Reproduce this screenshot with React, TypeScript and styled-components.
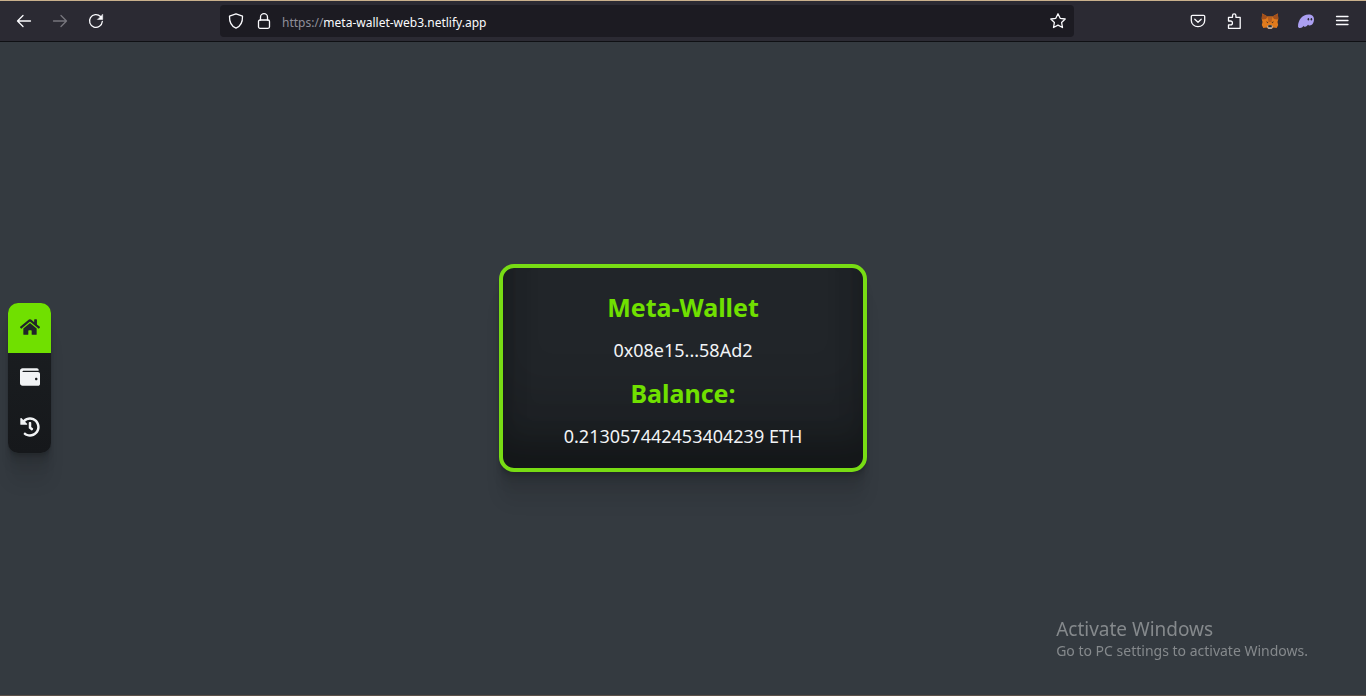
import React, { useState } from "react";
import styled, { createGlobalStyle } from "styled-components";
import { FaHistory, FaHome, FaWallet } from "react-icons/fa";

const GlobalStyle = createGlobalStyle`
  *, *::before, *::after { box-sizing: border-box; }
  body {
    margin: 0;
    background: #343a40;
    font-family: "Noto Sans", sans-serif;
  }
  button { border: 0; padding: 0; background: none; cursor: pointer; }
`;

const Page = styled.div`
  display: flex;
  flex-direction: column;
  min-height: 100vh;
  border-bottom: 1px solid #5c5047;
`;

const Toolbar = styled.header`
  display: flex;
  align-items: center;
  gap: 8%;
  height: 42px;
  padding: 0 8px;
  background: #2b2a33;
  border-top: 1px solid #c9b08c;
  border-bottom: 1px solid #0f1014;
`;

const ToolGroup = styled.div`
  display: flex;
  gap: 4px;
`;

const ToolButton = styled.button`
  display: grid;
  place-items: center;
  width: 32px;
  height: 32px;
  color: #fbfbfe;
  &:disabled { color: #77767e; }
`;

const AddressBar = styled.div`
  display: flex;
  flex: 1;
  align-items: center;
  min-width: 0;
  height: 32px;
  padding-left: 2px;
  border-radius: 4px;
  background: #1c1b22;
`;

const AddressButton = styled(ToolButton)`
  width: 28px;
`;

const Scheme = styled.label`
  padding: 3px 0 0 4px;
  font-size: 12px;
  line-height: 20px;
  color: #8f8f9a;
`;

const AddressInput = styled.input`
  flex: 1;
  min-width: 0;
  height: 23px;
  padding: 3px 0 0;
  border: 0;
  outline: 0;
  background: none;
  font-family: inherit;
  font-size: 12px;
  line-height: 20px;
  color: #fbfbfe;
`;

const Main = styled.main`
  display: grid;
  flex: 1;
  grid-template-columns: 1fr auto 1fr;
  align-items: center;
  padding: 0 8px 2px;
`;

const SideNav = styled.nav`
  display: flex;
  flex-direction: column;
  width: 43px;
  margin-top: 20px;
  overflow: hidden;
  border-radius: 10px;
  background: linear-gradient(#1b1f22, #16181b);
  box-shadow: 0 2px 1px #0000000f, 0 4px 2px #0000000f, 0 8px 4px #0000000f,
    0 16px 8px #0000000f, 0 32px 16px #0000000f;
`;

const NavButton = styled.button<{ $active: boolean }>`
  display: grid;
  place-items: center;
  height: 50px;
  padding-bottom: 2px;
  font-size: 20px;
  && {
    color: ${(p) => (p.$active ? "#212529" : "#f1f3f5")};
    background: ${(p) => (p.$active ? "#70e000" : "transparent")};
  }
`;

const Card = styled.section`
  display: flex;
  flex-direction: column;
  align-items: center;
  gap: 8px;
  width: 368px;
  padding: 20px 16px 16px;
  border: 4px solid #78dc14;
  border-radius: 15px;
  background: #212529;
  text-align: center;
  box-shadow: inset 0 -23px 25px #0000002b, inset 0 -36px 30px #00000026,
    inset 0 -79px 40px #0000001a, 0 2px 1px #0000000f, 0 4px 2px #0000000f,
    0 8px 4px #0000000f, 0 16px 8px #0000000f, 0 32px 16px #0000000f;
`;

const Heading = styled.h2`
  margin: 0;
  font-size: 25px;
  line-height: 38px;
  font-weight: 700;
  color: #70e000;
`;

const Value = styled.p`
  margin: 0;
  font-size: 18px;
  line-height: 32px;
  color: #f1f3f5;
`;

const Watermark = styled.aside`
  position: fixed;
  right: 58px;
  bottom: 35px;
  color: #85898c;
  pointer-events: none;
`;

const WatermarkTitle = styled.p`
  margin: 0;
  font-size: 19px;
  line-height: 24px;
`;

const WatermarkText = styled.p`
  margin: 0;
  font-size: 14px;
  line-height: 20px;
`;

const Line = ({ children }: { children: React.ReactNode }) => (
  <svg width="16" height="16" viewBox="0 0 16 16" fill="none" stroke="currentColor"
    strokeWidth="1.3" strokeLinecap="round" strokeLinejoin="round" aria-hidden="true">
    {children}
  </svg>
);

const Fox = () => (
  <svg width="18" height="18" viewBox="0 0 18 18" aria-hidden="true">
    <path d="M1.200 1.500 6.500 4.500h5l5.300-3 .5 5.500-.8 3 .7 3-1.500 3-3.200-.6L10.500 17h-3L5.500 15.400 2.300 16 .8 13l.7-3-.8-3z" fill="#e07a1c" />
    <path d="M1.200 1.500 6.500 4.500 5 7 1.500 7.500.7 6.500zM16.800 1.500 11.500 4.500 13 7l3.500.5.8-1z" fill="#a2501d" />
    <path d="M6.500 4.500h5L10.500 10h-3z" fill="#b8601f" />
    <path d="M5 9.300l2.400 1-.9.900zM13 9.300l-2.400 1 .9.900z" fill="#4a3428" />
    <path d="M6 14.800 7.300 13h3.400l1.300 1.800-1.500 2.200h-3z" fill="#b9aea4" />
    <path d="M7.300 13.200h3.400v2H7.300z" fill="#24282d" />
  </svg>
);

const Ghost = () => (
  <svg width="18" height="18" viewBox="0 0 18 18" aria-hidden="true">
    <path d="M1 14.500C1 8 5.500 2.500 11.500 2.500c3.500 0 5.500 1.800 5.500 4.800 0 3.400-1.800 6.200-4.300 6.200-.9 0-1.400-.4-1.600-1-.7 1.200-1.700 2.300-3 2.300-.9 0-1.500-.4-1.600-1.100C5.600 15 4.500 16 3 16c-1.200 0-2-.6-2-1.500z" fill="#ab9ff2" />
    <ellipse cx="11.400" cy="7.200" rx=".8" ry="1.300" fill="#2b2a33" />
    <ellipse cx="14.400" cy="7.200" rx=".8" ry="1.300" fill="#2b2a33" />
  </svg>
);

const navItems = [
  { label: "Home", Icon: FaHome },
  { label: "Wallet", Icon: FaWallet },
  { label: "History", Icon: FaHistory },
];

export default function App() {
  const [active, setActive] = useState("Home");
  const [address, setAddress] = useState("meta-wallet-web3.netlify.app");

  return (
    <Page>
      <GlobalStyle />
      <Toolbar>
        <ToolGroup>
          <ToolButton aria-label="Back">
            <Line><path d="M14.500 8h-13M7 2.500 1.500 8 7 13.500" /></Line>
          </ToolButton>
          <ToolButton aria-label="Forward" disabled>
            <Line><path d="M1.500 8h13M9 2.500 14.500 8 9 13.500" /></Line>
          </ToolButton>
          <ToolButton aria-label="Reload">
            <Line>
              <path d="M14.300 8.500A6.400 6.400 0 1 1 12.500 3.500" />
              <path d="M14.700 1.500v5H9.700z" fill="currentColor" strokeWidth=".5" />
            </Line>
          </ToolButton>
        </ToolGroup>
        <AddressBar>
          <AddressButton aria-label="Tracking protection">
            <Line><path d="M8 .8 14.500 3.200c.2 5.500-1.500 9.800-6.500 12C3 13 1.300 8.700 1.500 3.200z" /></Line>
          </AddressButton>
          <AddressButton aria-label="Site security">
            <Line>
              <rect x="2.500" y="7" width="11" height="8.300" rx="1.500" />
              <path d="M4.500 7V4.200a3.500 3.500 0 0 1 7 0V7" />
            </Line>
          </AddressButton>
          <Scheme htmlFor="address">https://</Scheme>
          <AddressInput id="address" value={address} onChange={(e) => setAddress(e.target.value)} />
          <ToolButton aria-label="Bookmark this page">
            <Line>
              <path d="M8 .8 10.200 5.300l5 .7-3.600 3.500.9 5L8 12.200l-4.500 2.300.9-5L.8 6l5-.7z" />
            </Line>
          </ToolButton>
        </AddressBar>
        <ToolGroup>
          <ToolButton aria-label="Save to Pocket">
            <Line>
              <path d="M2.500 2.300h11a1.200 1.200 0 0 1 1.200 1.200v4a6.700 6.200 0 0 1-13.400 0v-4a1.200 1.200 0 0 1 1.200-1.200z" />
              <path d="M4.800 6.300 8 9.300l3.200-3" />
            </Line>
          </ToolButton>
          <ToolButton aria-label="Extensions">
            <Line>
              <path d="M2.500 8V4.300h4V2.500a1.700 1.700 0 0 1 3.400 0v1.800h4.300v11H2.500v-3.400h2a1.900 1.900 0 0 0 0-3.900z" />
            </Line>
          </ToolButton>
          <ToolButton aria-label="MetaMask"><Fox /></ToolButton>
          <ToolButton aria-label="Phantom"><Ghost /></ToolButton>
          <ToolButton aria-label="Open application menu">
            <Line><path d="M2.500 3.500h11.500M2.500 7.500h11.500M2.500 11.500h11.500" /></Line>
          </ToolButton>
        </ToolGroup>
      </Toolbar>
      <Main>
        <SideNav>
          {navItems.map(({ label, Icon }) => (
            <NavButton key={label} aria-label={label} $active={active === label} onClick={() => setActive(label)}>
              <Icon />
            </NavButton>
          ))}
        </SideNav>
        <Card>
          <Heading>Meta-Wallet</Heading>
          <Value>0x08e15...58Ad2</Value>
          <Heading>Balance:</Heading>
          <Value>0.213057442453404239 ETH</Value>
        </Card>
      </Main>
      <Watermark>
        <WatermarkTitle>Activate Windows</WatermarkTitle>
        <WatermarkText>Go to PC settings to activate Windows.</WatermarkText>
      </Watermark>
    </Page>
  );
}
